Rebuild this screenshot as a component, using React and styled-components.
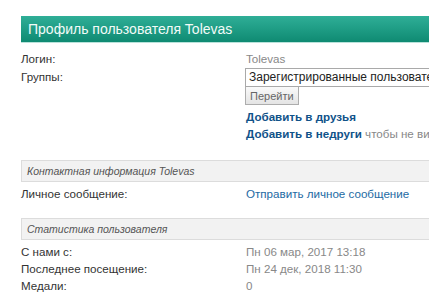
import React from "react";
import styled, { createGlobalStyle } from "styled-components";

const GlobalStyle = createGlobalStyle`
  html, body {
    margin: 0;
    padding: 0;
    background: #fff;
    overflow: hidden;
  }
  body {
    font-family: "Liberation Sans", Arial, sans-serif;
    color: #333;
  }
`;

const Page = styled.div`
  padding: 16px 0 0 21px;
  width: 408px;
`;

const Header = styled.h2`
  margin: 0;
  height: 26px;
  padding: 0 7px;
  display: flex;
  align-items: center;
  font-size: 14px;
  font-weight: normal;
  color: #f2fbf8;
  background: linear-gradient(to bottom, #2fae97 0%, #1d9b83 55%, #0f8a72 100%);
  border-bottom: 1px solid #b9e2da;
`;

const Details = styled.div`
  display: grid;
  grid-template-columns: 225px 1fr;
  margin-top: ${(p) => p.$top || 0}px;
  font-size: 11.6px;
  line-height: 17px;
`;

const Label = styled.div`
  color: #333;
  padding-top: ${(p) => p.$pad || 0}px;
`;

const Value = styled.div`
  color: ${(p) => (p.$muted ? "#888" : "#333")};
  white-space: nowrap;
  padding-top: ${(p) => p.$pad || 0}px;
`;

const Select = styled.div`
  width: 210px;
  height: 17px;
  border: 1px solid #a9a9a9;
  background: #fff;
  color: #222;
  font-size: 12px;
  line-height: 17px;
  padding-left: 3px;
  white-space: nowrap;
  overflow: hidden;
  margin-left: -1px;
`;

const GoButton = styled.button`
  display: block;
  height: 18px;
  margin: 0 0 3px -1px;
  padding: 0 4px;
  font-family: inherit;
  font-size: 11px;
  color: #666;
  background: linear-gradient(to bottom, #fafafa, #e4e4e4);
  border: 1px solid #adadad;
  border-top: none;
`;

const Link = styled.a`
  color: ${(p) => (p.$bold ? "#105289" : "#1d6aa3")};
  font-weight: ${(p) => (p.$bold ? "bold" : "normal")};
  text-decoration: none;
`;

const Hint = styled.span`
  color: #888;
`;

const Section = styled.div`
  margin-top: ${(p) => p.$top}px;
  height: 20px;
  padding-left: 5px;
  display: flex;
  align-items: center;
  background: #f2f2f2;
  border: 1px solid #dcdcdc;
  border-right: none;
  font-size: 10.5px;
  font-style: italic;
  color: #555;
`;

const App = () => (
  <>
    <GlobalStyle />
    <Page>
      <Header>Профиль пользователя Tolevas</Header>
      <Details $top={7}>
        <Label>Логин:</Label>
        <Value $muted>Tolevas</Value>
        <Label $pad={1}>Группы:</Label>
        <Value $pad={1}>
          <Select>Зарегистрированные пользователи</Select>
          <GoButton>Перейти</GoButton>
          <div>
            <Link $bold href="#">Добавить в друзья</Link>
          </div>
          <div>
            <Link $bold href="#">Добавить в недруги</Link>{" "}
            <Hint>чтобы не видеть его сообщений</Hint>
          </div>
        </Value>
      </Details>
      <Section $top={18}>Контактная информация Tolevas</Section>
      <Details $top={3}>
        <Label>Личное сообщение:</Label>
        <Value>
          <Link href="#">Отправить личное сообщение</Link>
        </Value>
      </Details>
      <Section $top={16}>Статистика пользователя</Section>
      <Details $top={3}>
        <Label>С нами с:</Label>
        <Value $muted>Пн 06 мар, 2017 13:18</Value>
        <Label>Последнее посещение:</Label>
        <Value $muted>Пн 24 дек, 2018 11:30</Value>
        <Label>Медали:</Label>
        <Value $muted>0</Value>
      </Details>
    </Page>
  </>
);

export default App;
